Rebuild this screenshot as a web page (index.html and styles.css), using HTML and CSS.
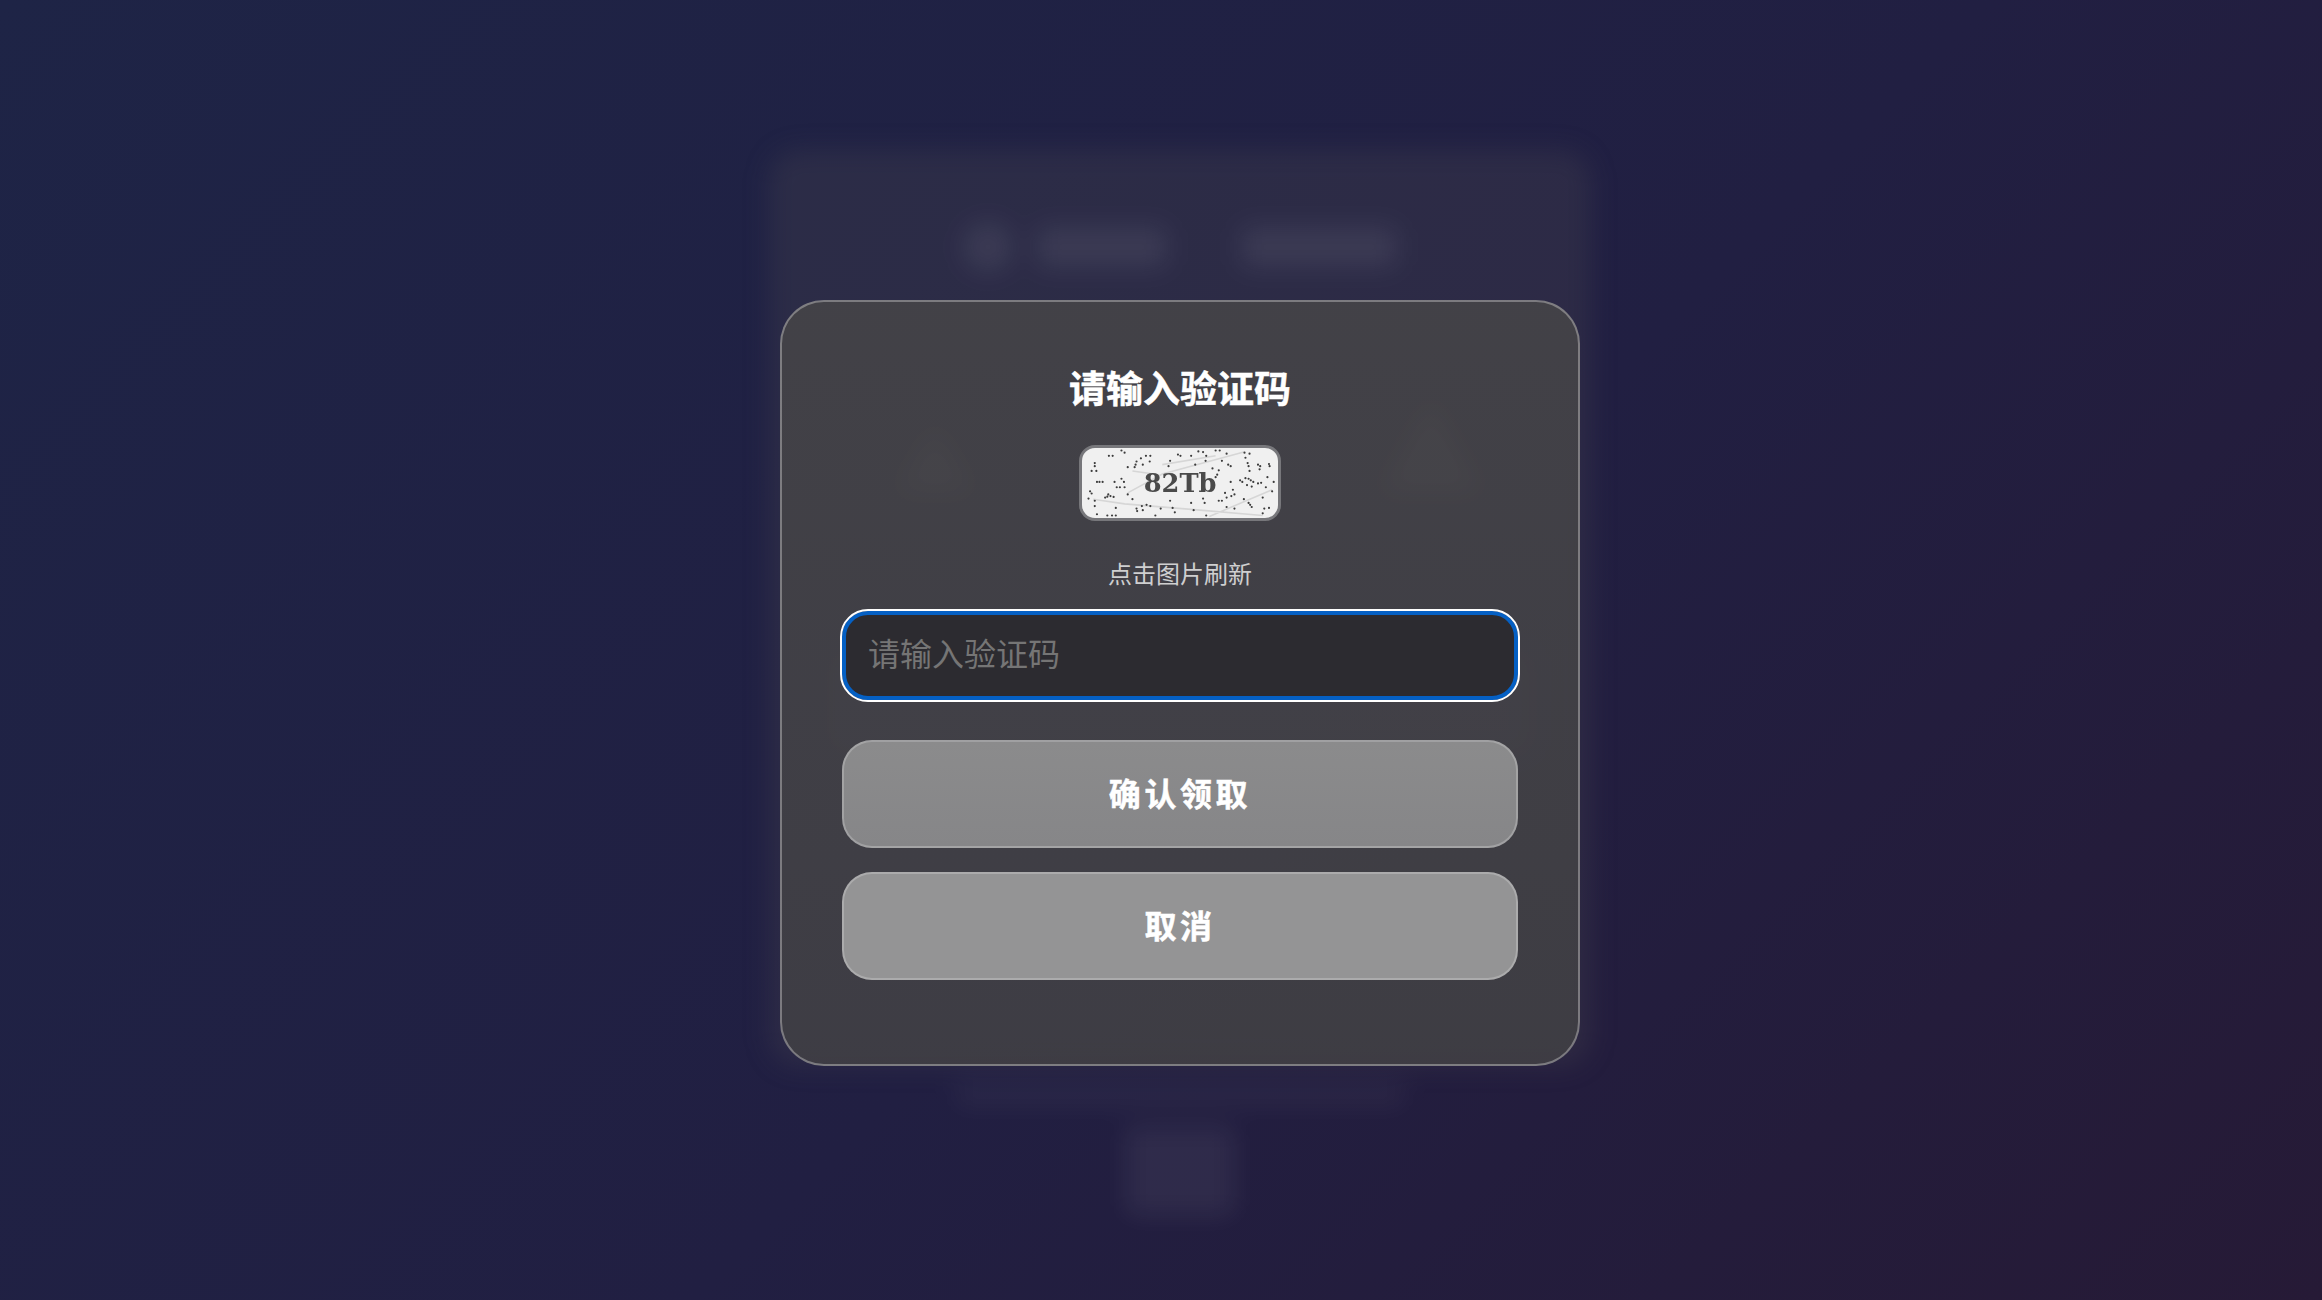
FILE: index.html
```html
<!DOCTYPE html>
<html lang="zh-CN">
<head>
  <meta charset="UTF-8">
  <title>请输入验证码</title>
  <link rel="stylesheet" href="styles.css">
</head>
<body>

  <!-- page behind the dialog, out of focus -->
  <div class="backdrop">
    <div class="card">
      <div class="card-head">
        <div class="blob blob-round"></div>
        <div class="blob blob-title"></div>
        <div class="blob blob-title2"></div>
      </div>
      <div class="card-prizes">
        <div class="prize"></div>
        <div class="prize prize-big"></div>
      </div>
      <div class="blob blob-action"></div>
    </div>
    <div class="blob blob-foot"></div>
    <div class="blob blob-code"></div>
  </div>

  <div class="overlay">
    <div class="dialog">
      <div class="dialog-title">请输入验证码</div>

      <div class="captcha">
        <svg viewBox="55 47 603 223" width="196" height="70">
          <path class="captcha-lines" d="M190 190 L300 130 L560 60 M205 120 L290 132 M80 210 L180 225 L420 245 L620 262 M450 265 L650 180 M300 100 L470 72"/>
          <path class="captcha-dots" d="M170 55h0M180 62h0M130 72h0M142 72h0M232 80h0M248 72h0M262 72h0M350 68h0M358 72h0M392 72h0M415 58h0M430 60h0M440 72h0M470 55h0M483 55h0M505 65h0M562 62h0M578 65h0M565 78h0M640 98h0M642 105h0M572 95h0M575 105h0M605 100h0M612 105h0M610 115h0M578 120h0M85 95h0M85 105h0M75 120h0M90 120h0M215 100h0M218 90h0M212 108h0M238 100h0M260 90h0M190 108h0M325 88h0M320 105h0M405 100h0M438 88h0M460 112h0M490 88h0M510 100h0M518 105h0M480 118h0M475 132h0M470 140h0M635 140h0M100 155h0M110 155h0M92 155h0M148 155h0M170 145h0M178 155h0M155 172h0M165 172h0M180 172h0M518 155h0M548 150h0M555 155h0M565 143h0M575 145h0M582 150h0M590 155h0M605 160h0M615 158h0M585 170h0M570 165h0M630 172h0M655 155h0M70 185h0M75 192h0M128 195h0M135 200h0M118 205h0M125 202h0M145 203h0M190 195h0M205 210h0M500 190h0M505 205h0M525 180h0M530 195h0M520 200h0M490 215h0M560 210h0M575 222h0M620 205h0M585 235h0M580 228h0M650 185h0M65 208h0M85 215h0M85 232h0M325 215h0M392 222h0M430 208h0M435 222h0M152 238h0M218 240h0M220 248h0M235 232h0M238 245h0M250 228h0M262 232h0M295 240h0M333 238h0M340 252h0M400 245h0M480 215h0M505 235h0M530 240h0M625 240h0M640 238h0M620 255h0M92 258h0M125 262h0M140 262h0M152 262h0M278 262h0M440 262h0"/>
          <text class="captcha-text" x="357" y="187" text-anchor="middle">82Tb</text>
        </svg>
      </div>

      <div class="hint">点击图片刷新</div>

      <input class="code-input" type="text" placeholder="请输入验证码">

      <button class="btn btn-confirm">确认领取</button>
      <button class="btn btn-cancel">取消</button>
    </div>
  </div>

</body>
</html>
```

FILE: styles.css
```css
* { box-sizing: border-box; }

html, body {
  margin: 0;
  padding: 0;
  height: 100%;
  overflow: hidden;
}

body {
  position: relative;
  background: linear-gradient(135deg, #1e2446, #211f42 55%, #261a36);
  font-family: "Noto Sans CJK SC", "Noto Sans", sans-serif;
}

/* blurred page */
.backdrop {
  height: 100%;
  padding: 150px 0 0 38px;
  display: flex;
  flex-direction: column;
  align-items: center;
  filter: blur(12px);
}

.card {
  width: 822px;
  height: 916px;
  padding: 72px 40px 0;
  background: rgba(72, 68, 78, 0.3);
  border-radius: 30px;
  display: flex;
  flex-direction: column;
  align-items: center;
}

.blob {
  background: rgba(255, 255, 255, 0.07);
  border-radius: 10px;
  flex: none;
}

.card-head {
  display: flex;
  align-items: center;
  gap: 24px;
}

.blob-round { width: 50px; height: 50px; border-radius: 50%; }
.blob-title { width: 130px; height: 40px; margin-right: 50px; }
.blob-title2 { width: 156px; height: 40px; }

.card-prizes {
  width: 100%;
  padding: 128px 70px 0 88px;
  display: flex;
  justify-content: space-between;
  align-items: flex-end;
}

.prize {
  width: 76px;
  height: 66px;
  background: rgba(255, 255, 230, 0.16);
  clip-path: polygon(50% 0, 100% 100%, 0 100%);
}

.prize-big { width: 100px; height: 92px; }

.blob-action {
  width: 700px;
  height: 100px;
  margin-top: 160px;
}

.blob-foot {
  width: 452px;
  height: 28px;
  margin-top: 14px;
  background: rgba(255, 255, 255, 0.035);
}

.blob-code {
  width: 110px;
  height: 90px;
  margin-top: 18px;
  background: rgba(255, 255, 255, 0.06);
}

/* dialog layer */
.overlay {
  position: absolute;
  top: 0;
  left: 0;
  right: 0;
  bottom: 0;
  padding: 300px 0 0 38px;
  display: flex;
  justify-content: center;
  align-items: flex-start;
}

.dialog {
  width: 800px;
  height: 766px;
  padding: 60px;
  background: linear-gradient(180deg, rgba(69, 68, 71, 0.9), rgba(64, 63, 68, 0.9));
  border: 2px solid rgba(255, 255, 255, 0.32);
  border-radius: 44px;
  display: flex;
  flex-direction: column;
  align-items: center;
}

.dialog-title {
  font-size: 37px;
  line-height: 50px;
  font-weight: bold;
  color: #fff;
  -webkit-text-stroke: 0.5px #fff;
}

.captcha {
  width: 202px;
  height: 76px;
  margin-top: 33px;
  background: #f0f0f0;
  border: 3px solid #77777b;
  border-radius: 16px;
  overflow: hidden;
  cursor: pointer;
}

.captcha svg { display: block; filter: blur(0.4px); }

.captcha-dots {
  fill: none;
  stroke: #3c3c3c;
  stroke-width: 7;
  stroke-linecap: round;
}

.captcha-lines {
  fill: none;
  stroke: #d6d6d6;
  stroke-width: 5;
}

.captcha-text {
  font-family: "DejaVu Serif", serif;
  font-size: 82px;
  font-weight: bold;
  fill: #4a4a4a;
}

.hint {
  margin: 35px 0 21px;
  font-size: 24px;
  line-height: 34px;
  color: rgba(255, 255, 255, 0.75);
}

.code-input {
  width: 676px;
  height: 89px;
  flex: none;
  padding: 0 22px 7px;
  background: #2c2b30;
  border: 4px solid #0560c4;
  border-radius: 26px;
  outline: 2px solid #fff;
  font-family: inherit;
  font-size: 32px;
  color: #fff;
}

.code-input::placeholder { color: #757575; }

.btn {
  width: 676px;
  height: 108px;
  flex: none;
  padding: 0 0 5px;
  border: 2px solid rgba(255, 255, 255, 0.22);
  border-radius: 30px;
  font-family: inherit;
  font-size: 32px;
  font-weight: bold;
  letter-spacing: 3.6px;
  color: #fff;
  -webkit-text-stroke: 0.5px #fff;
  cursor: pointer;
}

.btn-confirm {
  margin-top: 40px;
  background: linear-gradient(180deg, #8b8b8c, #868688);
}

.btn-cancel {
  margin-top: 24px;
  background: #949495;
}
```
